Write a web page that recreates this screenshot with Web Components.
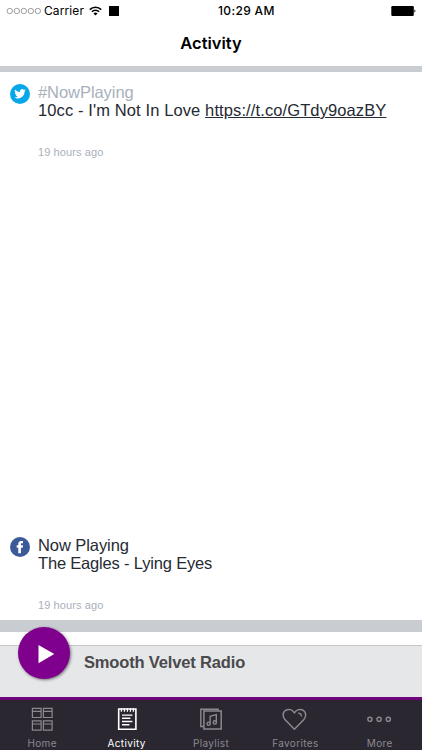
<!DOCTYPE html>
<html lang="en">
<head>
<meta charset="utf-8">
<title>Activity</title>
<style>
    html, body {
        margin: 0;
        height: 100%;
        background: #fff;
        overflow: hidden;
    }
    body {
        font-family: "Liberation Sans", Arial, sans-serif;
    }
    .tag {
        color: #a9b0bc;
        letter-spacing: -0.06px;
    }
    .track {
        letter-spacing: 0.11px;
    }
    .tight {
        letter-spacing: -0.18px;
    }
</style>
</head>
<body>
<radio-app>
    <status-bar slot="top" carrier="Carrier" time="10:29 AM"></status-bar>
    <nav-title slot="top">Activity</nav-title>
    <activity-post network="twitter" ago="19 hours ago">
        <span slot="title" class="tag">#NowPlaying</span>
        <span class="track">10cc - I'm Not In Love <u>https://t.co/GTdy9oazBY</u></span>
    </activity-post>
    <activity-post network="facebook" ago="19 hours ago">
        <span slot="title" style="letter-spacing: -0.08px">Now Playing</span>
        <span class="tight">The Eagles - Lying Eyes</span>
    </activity-post>
    <player-bar slot="bottom">Smooth Velvet Radio</player-bar>
    <tab-bar slot="bottom">
        <tab-item icon="home">Home</tab-item>
        <tab-item icon="activity" active>Activity</tab-item>
        <tab-item icon="playlist">Playlist</tab-item>
        <tab-item icon="favorites">Favorites</tab-item>
        <tab-item icon="more">More</tab-item>
    </tab-bar>
</radio-app>

<script>
const networkIcons = {
    twitter: `
        <svg width="20" height="20" viewBox="0 0 20 20">
            <circle cx="10" cy="10" r="10" fill="#08a8e8"/>
            <path transform="translate(4.3 4.1) scale(.475)" fill="#fff" d="M23.95 4.57a10 10 0 0 1-2.82.77 4.96 4.96 0 0 0 2.16-2.72c-.95.55-2 .95-3.13 1.18a4.92 4.92 0 0 0-8.38 4.48C7.69 8.1 4.07 6.13 1.64 3.16a4.92 4.92 0 0 0 1.52 6.57 4.9 4.9 0 0 1-2.23-.61v.06a4.92 4.92 0 0 0 3.95 4.83 4.9 4.9 0 0 1-2.21.08 4.94 4.94 0 0 0 4.6 3.42A9.87 9.87 0 0 1 0 19.54a14 14 0 0 0 7.55 2.21c9.05 0 14-7.5 14-13.98 0-.21 0-.42-.02-.63a9.9 9.9 0 0 0 2.42-2.57z"/>
        </svg>`,
    facebook: `
        <svg width="20" height="20" viewBox="0 0 20 20">
            <circle cx="10" cy="10" r="10" fill="#3d5a98"/>
            <path fill="#fff" d="M8.3 16.2V10.8H6.7V8.2h1.6V7c0-2 1-3.1 2.9-3.1h1.8v2.3h-1.1c-.8 0-1 .4-1 1v1h2.1l-.3 2.6h-1.8v5.4z"/>
        </svg>`
};

const tabIcons = {
    home: `
        <svg width="24" height="26" viewBox="0 0 24 26">
            <path d="M2.4 2.3h8.7v9.2H2.4zM13.4 2.3h8.7v9.2h-8.7zM2.4 14.9h8.7v9.2H2.4zM13.4 14.9h8.7v9.2h-8.7z" stroke-width="1.2"/>
            <path d="M2.4 5.4h8.7M13.4 5.4h8.7M2.4 18h8.7M13.4 18h8.7" stroke-width="1.2"/>
        </svg>`,
    activity: `
        <svg width="24" height="26" viewBox="0 0 24 26">
            <path d="M3.7 3h17.2v20.3H3.7z" stroke-width="1.6"/>
            <path d="M6.4 2.2V5.8M9.4 2.2V5.8M12.4 2.2V5.8M15.4 2.2V5.8M18.4 2.2V5.8" stroke-width="1.3"/>
            <path d="M7 9.1h10.4M7 12.3h8.4M7 15.5h10.4M7 18.7h7.4" stroke-width="1.4"/>
        </svg>`,
    playlist: `
        <svg width="24" height="26" viewBox="0 0 24 26">
            <path d="M4.9 5h17.3v18H4.9z" stroke-width="1.5"/>
            <path d="M4.6 20.5H1.8V3.2h17.3V5" stroke-width="1.4"/>
            <path d="M11.1 17.6V10.2l6.2-1.6v7.5" stroke-width="1.4"/>
            <circle cx="9.6" cy="17.7" r="1.6" stroke-width="1.4"/>
            <circle cx="15.8" cy="16.4" r="1.6" stroke-width="1.4"/>
        </svg>`,
    favorites: `
        <svg width="26" height="26" viewBox="0 0 26 26">
            <path d="M12.4 23.3 2.9 13.4C.3 10.6.6 6.4 3.5 4.4c3-2 6.8-.9 8.900 2.500 2.100-3.400 5.900-4.500 8.900-2.500 2.900 2 3.200 6.200.6 9z" stroke-width="1.5" stroke-linejoin="round"/>
            <path d="M16.200 7.300c2.100-.1 3.300 1.100 3.300 3.200" stroke-width="1.400"/>
        </svg>`,
    more: `
        <svg width="26" height="26" viewBox="0 0 26 26">
            <circle cx="2.9" cy="13.3" r="2.1" stroke-width="1.4"/>
            <circle cx="12.1" cy="13.3" r="2.1" stroke-width="1.4"/>
            <circle cx="21.3" cy="13.3" r="2.1" stroke-width="1.4"/>
        </svg>`
};

class RadioApp extends HTMLElement {
    constructor() {
        super();
        this.attachShadow({ mode: 'open' });
        this.shadowRoot.innerHTML = `
            <style>
                :host {
                    display: flex;
                    flex-direction: column;
                    height: 750px;
                    background: #fff;
                }
                main {
                    flex: 1;
                    display: flex;
                    flex-direction: column;
                    justify-content: space-between;
                    box-sizing: border-box;
                    border-top: 6px solid #c9ccd1;
                    border-bottom: 12px solid #c9ccd1;
                    margin-bottom: 13px;
                    padding: 11px 0 7px;
                }
            </style>
            <slot name="top"></slot>
            <main><slot></slot></main>
            <slot name="bottom"></slot>
        `;
    }
}

class StatusBar extends HTMLElement {
    constructor() {
        super();
        this.attachShadow({ mode: 'open' });
    }

    connectedCallback() {
        this.shadowRoot.innerHTML = `
            <style>
                :host {
                    display: grid;
                    grid-template-columns: 212px auto 1fr;
                    align-items: center;
                    height: 22px;
                    padding: 0 6px 0 6px;
                    font: 12px/22px Inter, sans-serif;
                    color: #000;
                }
                .left {
                    display: flex;
                    align-items: center;
                }
                .carrier {
                    margin: 0 5px 0 3px;
                    letter-spacing: 0.1px;
                }
                .square {
                    width: 10.5px;
                    height: 10.5px;
                    margin-left: 6.5px;
                    background: #000;
                }
                .time {
                    font-weight: 500;
                    letter-spacing: 0.35px;
                }
                .battery {
                    justify-self: end;
                }
                svg {
                    display: block;
                }
            </style>
            <div class="left">
                <svg width="35" height="8" viewBox="0 0 35 8" fill="none" stroke="#777" stroke-width=".7">
                    <circle cx="3.8" cy="4" r="2.7"/><circle cx="10.8" cy="4" r="2.7"/><circle cx="17.8" cy="4" r="2.7"/><circle cx="24.8" cy="4" r="2.7"/><circle cx="31.8" cy="4" r="2.7"/>
                </svg>
                <span class="carrier">${this.getAttribute('carrier')}</span>
                <svg width="13" height="10" viewBox="0 0 13 10" fill="none" stroke="#000" stroke-width="1.6">
                    <path d="M.8 3.6a8 8 0 0 1 11.4 0M2.9 5.8a5 5 0 0 1 7.2 0"/>
                    <path d="M6.5 9.4 4.5 7.4a2.9 2.9 0 0 1 4 0z" fill="#000" stroke="none"/>
                </svg>
                <span class="square"></span>
            </div>
            <span class="time">${this.getAttribute('time')}</span>
            <svg class="battery" width="25" height="11" viewBox="0 0 25 11">
                <rect x=".3" y="0" width="22.5" height="10" rx="1.2" fill="#000"/>
                <path d="M23.4 3.5c1.3.4 1.3 2.600 0 3z" fill="#000"/>
            </svg>
        `;
    }
}

class NavTitle extends HTMLElement {
    constructor() {
        super();
        this.attachShadow({ mode: 'open' });
        this.shadowRoot.innerHTML = `
            <style>
                :host {
                    display: flex;
                    align-items: center;
                    justify-content: center;
                    box-sizing: border-box;
                    height: 44px;
                    padding-bottom: 2px;
                    font: 600 16.5px Inter, sans-serif;
                    color: #000;
                }
            </style>
            <slot></slot>
        `;
    }
}

class ActivityPost extends HTMLElement {
    constructor() {
        super();
        this.attachShadow({ mode: 'open' });
    }

    connectedCallback() {
        this.shadowRoot.innerHTML = `
            <style>
                :host {
                    display: flex;
                    gap: 8px;
                    padding-left: 10px;
                    color: #252a33;
                    font-size: 16.5px;
                    line-height: 18px;
                    white-space: nowrap;
                }
                svg {
                    display: block;
                    margin-top: 1px;
                }
                ::slotted(span) {
                    display: block;
                }
                .ago {
                    margin-top: 25px;
                    font-size: 11px;
                    line-height: 16px;
                    color: #a9b0bc;
                    letter-spacing: 0.1px;
                }
            </style>
            ${networkIcons[this.getAttribute('network')]}
            <div>
                <slot name="title"></slot>
                <slot></slot>
                <div class="ago">${this.getAttribute('ago')}</div>
            </div>
        `;
    }
}

class PlayerBar extends HTMLElement {
    constructor() {
        super();
        this.attachShadow({ mode: 'open' });
        this.shadowRoot.innerHTML = `
            <style>
                :host {
                    display: flex;
                    align-items: flex-start;
                    box-sizing: border-box;
                    height: 52px;
                    padding-left: 18px;
                    border-top: 1px solid #c4c6c9;
                    background: #e6e7e9;
                    font-size: 16.5px;
                    line-height: 33px;
                    font-weight: bold;
                    letter-spacing: -0.16px;
                    color: #4a4a4c;
                }
                .play {
                    width: 52px;
                    height: 52px;
                    flex: none;
                    margin: -19px 14px 0 0;
                    border: 0;
                    padding: 0;
                    border-radius: 50%;
                    background: #7f008c;
                    box-shadow: 1px 1px 3px rgba(0, 0, 0, 0.5);
                }
                svg {
                    display: block;
                }
            </style>
            <button class="play" aria-label="Play">
                <svg width="52" height="52" viewBox="0 0 52 52"><path d="M20.5 18v18.3L36.3 27z" fill="#fff"/></svg>
            </button>
            <slot></slot>
        `;
    }
}

class TabBar extends HTMLElement {
    constructor() {
        super();
        this.attachShadow({ mode: 'open' });
        this.shadowRoot.innerHTML = `
            <style>
                :host {
                    display: grid;
                    grid-template-columns: repeat(5, 1fr);
                    box-sizing: border-box;
                    height: 53px;
                    border-top: 3px solid #70057c;
                    background: #2a2731;
                }
            </style>
            <slot></slot>
        `;
    }
}

class TabItem extends HTMLElement {
    constructor() {
        super();
        this.attachShadow({ mode: 'open' });
    }

    connectedCallback() {
        this.shadowRoot.innerHTML = `
            <style>
                :host {
                    display: flex;
                    flex-direction: column;
                    align-items: center;
                    padding-top: 5.5px;
                    font: 10px/14px Inter, sans-serif;
                    letter-spacing: 0.35px;
                    color: #8b898f;
                }
                :host([active]) {
                    color: #fff;
                }
                svg {
                    display: block;
                    margin-bottom: 4.5px;
                    fill: none;
                    stroke: currentColor;
                }
            </style>
            ${tabIcons[this.getAttribute('icon')]}
            <slot></slot>
        `;
    }
}

customElements.define('radio-app', RadioApp);
customElements.define('status-bar', StatusBar);
customElements.define('nav-title', NavTitle);
customElements.define('activity-post', ActivityPost);
customElements.define('player-bar', PlayerBar);
customElements.define('tab-bar', TabBar);
customElements.define('tab-item', TabItem);
</script>
</body>
</html>
